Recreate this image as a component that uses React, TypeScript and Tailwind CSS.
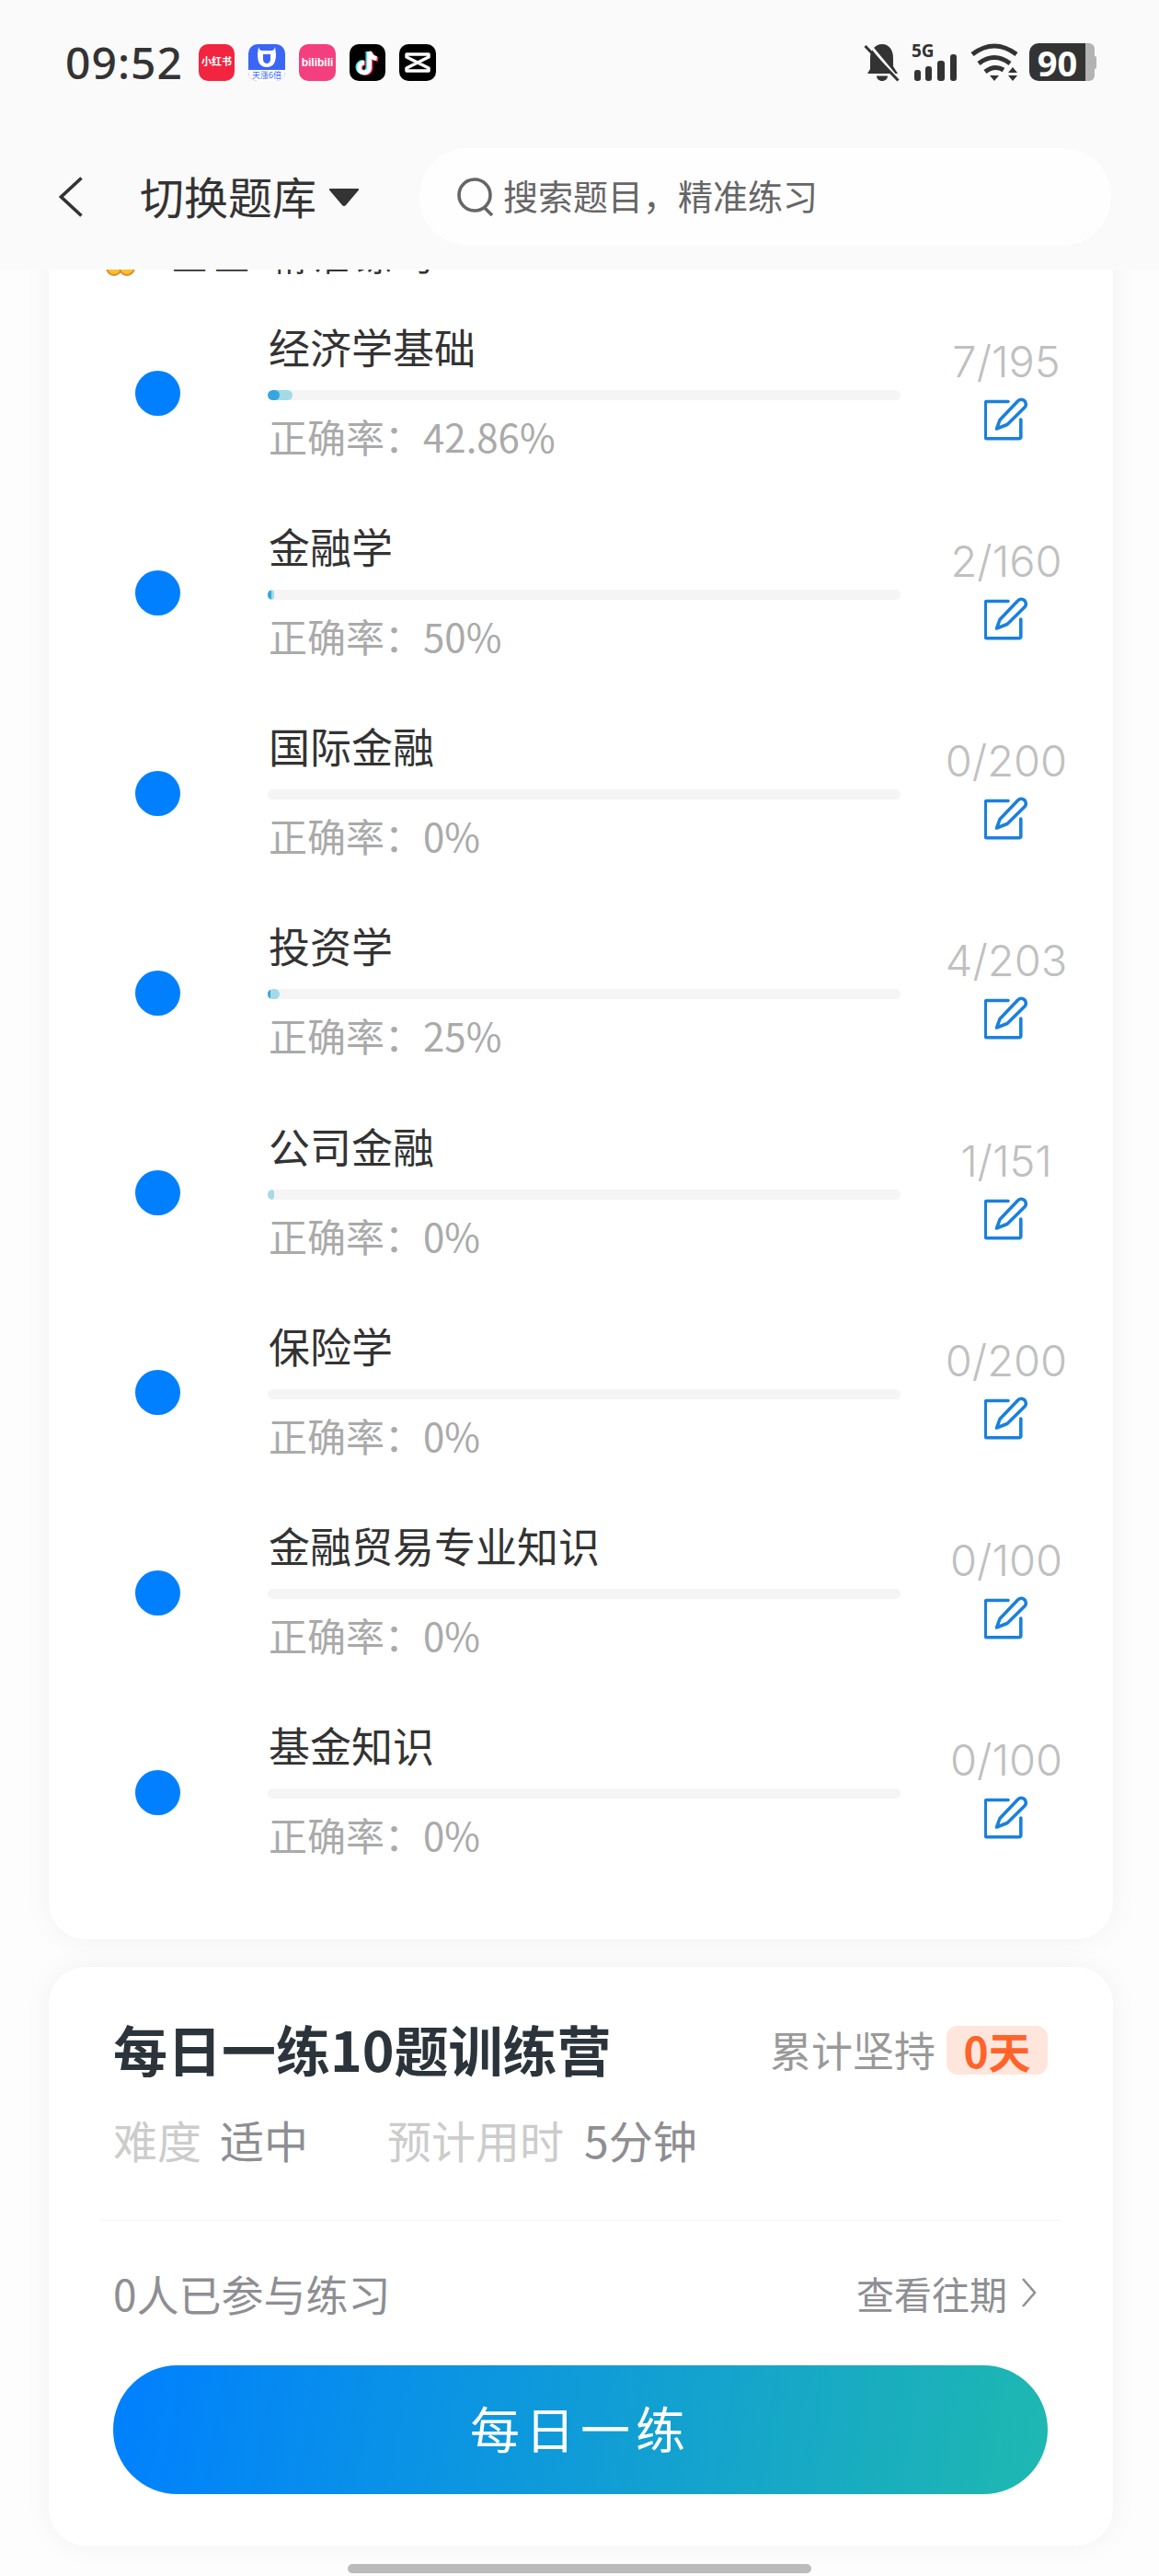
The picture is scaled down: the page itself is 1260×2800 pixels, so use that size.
const font = { fontFamily: '"Noto Sans CJK SC", "Noto Sans", sans-serif' };

const rows = [
  { name: "经济学基础", rate: "42.86%", count: "7/195", fill: 27, done: 13 },
  { name: "金融学", rate: "50%", count: "2/160", fill: 7, done: 4 },
  { name: "国际金融", rate: "0%", count: "0/200", fill: 0, done: 0 },
  { name: "投资学", rate: "25%", count: "4/203", fill: 13, done: 3 },
  { name: "公司金融", rate: "0%", count: "1/151", fill: 7, done: 0 },
  { name: "保险学", rate: "0%", count: "0/200", fill: 0, done: 0 },
  { name: "金融贸易专业知识", rate: "0%", count: "0/100", fill: 0, done: 0 },
  { name: "基金知识", rate: "0%", count: "0/100", fill: 0, done: 0 },
];

function EditIcon() {
  return (
    <svg width="49" height="49" viewBox="0 0 49 49" fill="none" stroke="#1a80dc" strokeWidth="3.6" strokeLinejoin="round" strokeLinecap="round">
      <path d="M26 6.500H3a1.800 1.800 0 0 0-1.800 1.800V45a1.800 1.800 0 0 0 1.800 1.800h35a1.800 1.800 0 0 0 1.800-1.800V26" />
      <path d="M13.500 36l3.500-9.500L36.500 6a5 5 0 0 1 7.500 6.800L25 31.500z" />
    </svg>
  );
}

function Row({ r }: { r: (typeof rows)[number] }) {
  return (
    <div className="flex h-[217.25px] items-center">
      <div className="ml-[94px] h-[49px] w-[49px] rounded-full bg-[#0080ff]" />
      <div className="ml-[95px] flex w-[688px] flex-col pb-[7px]">
        <div className="ml-[1px] h-[50px] text-[45px] leading-[50px] text-[#333333]">{r.name}</div>
        <div className="relative mt-[22px] h-[11px] w-full overflow-hidden rounded-full bg-[#f5f5f5]">
          {r.fill > 0 && <div className="absolute top-0 left-0 h-full rounded-full bg-[#a5d9e8]" style={{ width: r.fill }} />}
          {r.done > 0 && <div className="absolute top-0 left-0 h-full rounded-full bg-[#35a7dc]" style={{ width: r.done }} />}
        </div>
        <div className="mt-[16px] ml-[1px] h-[46px] text-[42px] leading-[46px] text-[#aaaaaa]">正确率：{r.rate}</div>
      </div>
      <div className="ml-[35px] flex w-[160px] flex-col items-center pb-[9px]">
        <div className="h-[50px] text-[47px] leading-[50px] font-light text-[#c0c0c0]" style={{ fontFamily: 'Inter, sans-serif' }}>{r.count}</div>
        <div className="mt-[12px]"><EditIcon /></div>
      </div>
    </div>
  );
}

function StatusBar() {
  return (
    <div className="flex h-[41px] items-center">
      <div className="ml-[71px] w-[145px] text-[48px] leading-[41px] font-medium tracking-[1px] text-[#333333]" style={{ fontFamily: '"Noto Sans", sans-serif' }}>09:52</div>
      <div className="flex h-[40px] w-[39px] flex-col rounded-[10px] bg-[#f3243f] pt-[12px] pl-[3px] text-[11px] leading-[12px] font-bold whitespace-nowrap text-white">
        小红书
      </div>
      <div className="ml-[15px] flex h-[40px] w-[40px] flex-col overflow-hidden rounded-[10px] bg-[#3b66f5]">
        <svg width="40" height="28" viewBox="0 0 40 28" fill="none">
          <path d="M11 3c1 3 2 4 4 4h10c2 0 3-1 4-4l1 8c0 9-3 14-10 14S10 20 10 11z" fill="#fff" />
          <path d="M16 11h8v6c0 2-2 4-4 4s-4-2-4-4z" fill="#3b66f5" />
        </svg>
        <div className="flex-1 bg-white text-center text-[9px] leading-[12px] whitespace-nowrap text-[#3b66f5]">天涨6倍</div>
      </div>
      <div className="ml-[15px] flex h-[40px] w-[40px] items-center justify-center rounded-[10px] bg-[#f43f7f] text-[12px] leading-none font-bold text-white" style={{ fontFamily: '"Liberation Sans", sans-serif' }}>
        bilibili
      </div>
      <div className="ml-[15px] h-[40px] w-[39px] rounded-[10px] bg-black">
        <svg width="39" height="40" viewBox="0 0 39 40" fill="none" strokeWidth="5">
          <path d="M20 8v17a5.500 5.500 0 1 1-5.500-5.500" stroke="#25f4ee" />
          <path d="M20 8c1 5 4 7 8 7.500" stroke="#25f4ee" />
          <path d="M23 9v17a5.500 5.500 0 1 1-5.500-5.500" stroke="#fe2c55" />
          <path d="M23 9c1 5 4 7 8 7.500" stroke="#fe2c55" />
          <path d="M21.500 8v17.500a5.500 5.500 0 1 1-5.500-5.500" stroke="#fff" />
          <path d="M21.500 8c1 5 4 7 8 7.500" stroke="#fff" />
        </svg>
      </div>
      <div className="ml-[15px] h-[40px] w-[40px] rounded-[10px] bg-black">
        <svg width="40" height="40" viewBox="0 0 40 40" fill="none" stroke="#fff" strokeWidth="3.500" strokeLinejoin="round">
          <path d="M8 11h24v3L20 20l12 6v3H8v-3l12-6L8 14z" />
        </svg>
      </div>
      <div className="ml-[465px]">
        <svg width="40" height="42" viewBox="0 0 40 42">
          <path d="M20 1c8 0 12 7 12 15v9l5 8H4l3-5V16C7 8 12 1 20 1z" fill="#333" />
          <path d="M14 35.500h12c0 3-2.500 5.500-6 5.500s-6-2.500-6-5.500z" fill="#333" />
          <path d="M5 0l35 42" stroke="#fbfbfb" strokeWidth="3" />
          <path d="M1.500 3l36 37.500" stroke="#333" strokeWidth="3" />
        </svg>
      </div>
      <div className="relative ml-[12px] h-[41px] w-[50px]">
        <div className="absolute top-[-4px] left-0 text-[19px] leading-[24px] font-bold text-[#333333]" style={{ fontFamily: '"Noto Sans", sans-serif' }}>5G</div>
        <svg className="absolute bottom-0 left-0" width="50" height="29" viewBox="0 0 50 29" fill="#333">
          <rect x="3" y="17" width="7" height="12" rx="3" />
          <rect x="15" y="13" width="7" height="16" rx="3" />
          <rect x="28" y="7" width="8" height="22" rx="3" />
          <rect x="42" y="0" width="7" height="29" rx="3" />
        </svg>
      </div>
      <div className="ml-[14px]">
        <svg width="52" height="41" viewBox="0 0 52 41" fill="none" stroke="#333" strokeWidth="5">
          <path d="M2 12Q26-6 50 12" />
          <path d="M9 22Q26 9 43 22" />
          <path d="M16 31Q26 23 36 29" />
          <path d="M21 35h10l-5 6zM41 32h10l-5-6zM41 35h10l-5 6z" fill="#333" stroke="none" />
        </svg>
      </div>
      <div className="ml-[12px] flex h-[41px] items-center">
        <div className="flex h-[41px] w-[61px] items-center justify-center rounded-l-[10px] bg-[#333333] text-[38px] leading-none font-bold text-white" style={{ fontFamily: '"Noto Sans", sans-serif' }}>90</div>
        <div className="h-[41px] w-[10px] rounded-r-[6px] bg-[#b3b3b3]" />
        <div className="h-[14px] w-[2px] rounded-r-[2px] bg-[#b3b3b3]" />
      </div>
    </div>
  );
}

function Header() {
  return (
    <div className="relative z-10 h-[293px] bg-[#fafafa] pt-[47px]">
      <StatusBar />
      <div className="mt-[73px] flex h-[106px] items-center">
        <svg className="ml-[64px]" width="26" height="44" viewBox="0 0 26 44" fill="none" stroke="#333" strokeWidth="3.600">
          <path d="M24.500 1.500L2.500 22l22 20.500" />
        </svg>
        <div className="-mt-[4px] ml-[62px] w-[193px] text-[48px] leading-[56px] whitespace-nowrap text-[#333333]">切换题库</div>
        <svg className="ml-[13px]" width="32" height="19" viewBox="0 0 32 19" fill="#333">
          <path d="M1 0h30a1 1 0 0 1 1 1.500L18 18a3 3 0 0 1-4 0L0 1.500A1 1 0 0 1 1 0z" />
        </svg>
        <div className="ml-[66px] flex h-[106px] w-[752px] items-center rounded-full bg-[#fefefe]">
          <svg className="ml-[41px]" width="40" height="42" viewBox="0 0 40 42" fill="none" stroke="#666" strokeWidth="3.600">
            <circle cx="19" cy="19" r="17" />
            <path d="M29 32l9 9" />
          </svg>
          <div className="-mt-[4px] ml-[10px] text-[38px] leading-[46px] whitespace-nowrap text-[#666666]">搜索题目，精准练习</div>
        </div>
      </div>
    </div>
  );
}

function Practice() {
  return (
    <div className="mt-[30px] mr-[50px] ml-[53px] h-[629px] rounded-[40px] bg-white pt-[54px] shadow-[0_0_30px_rgba(0,0,0,0.05)]">
      <div className="mr-[71px] ml-[70px] flex h-[70px] items-center justify-between">
        <div className="text-[59px] leading-[70px] font-bold whitespace-nowrap text-[#2c343b]">每日一练10题训练营</div>
        <div className="flex items-center pt-[2px]">
          <div className="text-[45px] leading-[54px] whitespace-nowrap text-[#999999]">累计坚持</div>
          <div className="ml-[12px] flex h-[53px] w-[110px] items-center justify-center rounded-[12px] bg-[#fee6dc] text-[46px] leading-[53px] font-bold text-[#ff6329]">0天</div>
        </div>
      </div>
      <div className="mt-[38px] ml-[70px] flex h-[50px] items-center text-[48px] leading-[50px]">
        <span className="text-[#cccccc]">难度</span>
        <span className="ml-[20px] text-[#8e8e93]">适中</span>
        <span className="ml-[86px] text-[#cccccc]">预计用时</span>
        <span className="ml-[22px] text-[#8e8e93]">5分钟</span>
      </div>
      <div className="mt-[63px] mr-[56px] ml-[56px] h-[1px] bg-[#f7f7f7]" />
      <div className="mt-[53px] mr-[83px] ml-[70px] flex h-[50px] items-center justify-between">
        <div className="text-[46px] leading-[50px] whitespace-nowrap text-[#8e8e93]">0人已参与练习</div>
        <div className="flex items-center">
          <div className="text-[41px] leading-[50px] whitespace-nowrap text-[#8e8e93]">查看往期</div>
          <svg className="ml-[15px]" width="17" height="32" viewBox="0 0 17 32" fill="none" stroke="#8e8e93" strokeWidth="2.500">
            <path d="M2 1l13 15L2 31" />
          </svg>
        </div>
      </div>
      <div className="mt-[54px] mr-[71px] ml-[70px] flex h-[140px] items-center justify-center rounded-full bg-[linear-gradient(100deg,#0080ff,#1fb8b0)] pb-[5px] text-[54px] tracking-[6px] text-white">
        每日一练
      </div>
    </div>
  );
}

export default function App() {
  return (
    <div className="relative h-[2800px] w-[1260px] overflow-hidden bg-[#fdfdfd]" style={font}>
      <Header />
      <div className="mr-[50px] ml-[53px] -mt-[40px] h-[1855px] rounded-b-[40px] bg-white shadow-[0_0_30px_rgba(0,0,0,0.05)]">
        <div className="flex h-[66px] items-start">
          <div className="relative mt-[-16px] ml-[62px] flex h-[64px] items-end">
            <svg className="mb-[-4px]" width="32" height="28" viewBox="0 0 32 28">
              <circle cx="9" cy="14" r="8" fill="#fbc02d" stroke="#e08a2c" strokeWidth="2" />
              <circle cx="23" cy="14" r="8" fill="#fbc02d" stroke="#e08a2c" strokeWidth="2" />
            </svg>
            <div className="ml-[40px] text-[38px] leading-[46px] tracking-[8px] text-[#333333]">工工 精准练习</div>
          </div>
        </div>
        {rows.map((r) => (
          <Row key={r.name} r={r} />
        ))}
      </div>
      <Practice />
      <div className="absolute top-[2787px] left-[378px] h-[10px] w-[504px] rounded-full bg-[#bbbbbb]" />
    </div>
  );
}
